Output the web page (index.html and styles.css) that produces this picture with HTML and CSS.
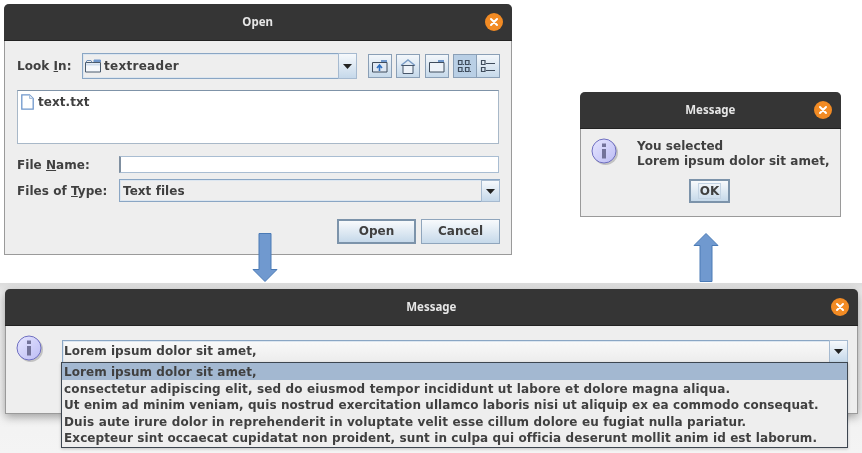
FILE: index.html
```html
<!DOCTYPE html>
<html lang="en">
<head>
<meta charset="utf-8">
<title>File dialogs</title>
<link rel="stylesheet" href="styles.css">
</head>
<body>
<svg width="0" height="0" class="defs">
  <defs>
    <linearGradient id="info" x1="0" y1="0" x2="1" y2="1"><stop offset="0" stop-color="#e6e6ff"/><stop offset="1" stop-color="#bcbcf4"/></linearGradient>
    <symbol id="info-icon" viewBox="0 0 28 28">
      <circle cx="14.500" cy="14.500" r="12.500" fill="#808080" opacity=".4"/>
      <circle cx="13" cy="13" r="12" fill="url(#info)" stroke="#6f6fc0" stroke-width="1"/>
      <rect x="11" y="11" width="4" height="9.500" fill="#73739a"/>
      <rect x="11" y="5.500" width="4" height="3.500" fill="#73739a"/>
    </symbol>
    <symbol id="close-icon" viewBox="0 0 18 18">
      <circle cx="9" cy="9" r="9" fill="#f28b24"/>
      <path d="M6 6l6 6M12 6l-6 6" stroke="#fff" stroke-width="2" stroke-linecap="round"/>
    </symbol>
    <symbol id="arrow-down" viewBox="0 0 9 5">
      <path d="M0 0h9L4.500 5z" fill="#222"/>
    </symbol>
  </defs>
</svg>

<section class="window open-dialog">
  <header class="titlebar"><span class="title">Open</span><svg class="close"><use href="#close-icon"/></svg></header>
  <div class="open-body">
    <div class="lookin-row">
      <label class="label lookin-label">Look <u>I</u>n:</label>
      <div class="combo lookin-combo">
        <svg class="small-icon" width="16" height="14" viewBox="0 0 16 14"><path d="M.5 3.500h15v9.500H.5z" fill="#f4f7fb" stroke="#4a5a6c"/><path d="M1 3.500l1-2h4l1 2" fill="none" stroke="#6f8fb8"/><path d="M9 3V1h6.500v2" fill="#6f97cc" stroke="#6f97cc"/><path d="M1 4.500h14v2H1z" fill="#cfdcec"/></svg>
        <span class="combo-text folder-name">textreader</span>
        <span class="combo-arrow"><svg width="9" height="5"><use href="#arrow-down"/></svg></span>
      </div>
      <div class="tools">
        <button class="tool"><svg width="16" height="14" viewBox="0 0 16 14"><path d="M.5 3.500h14.500v9.500H.5z" fill="#dfe8f3" stroke="#3f4c5c"/><path d="M9 3V1h6v2" fill="#6f97cc"/><path d="M7.500 12V7M5 9l2.500-3L10 9" fill="none" stroke="#2f6fc0" stroke-width="1.600"/></svg></button>
        <button class="tool"><svg width="16" height="15" viewBox="0 0 16 15"><path d="M1 6.500L8 1l7 5.500" fill="none" stroke="#7a9cc6" stroke-width="1.400"/><path d="M3 6.500h10v8H3z" fill="#eef3f9" stroke="#47566a"/><path d="M1.500 6.500h13" stroke="#47566a"/></svg></button>
        <button class="tool"><svg width="16" height="14" viewBox="0 0 16 14"><path d="M.5 3.500h14.500v9.500H.5z" fill="#eef3f9" stroke="#3f4c5c"/><path d="M9 3V1h6v2" fill="#6f97cc"/></svg></button>
        <div class="toggle-pair">
          <button class="tool pair active"><svg width="16" height="14" viewBox="0 0 16 14" fill="none" stroke="#3f4c5c" stroke-width="1.200"><path d="M1.500 1.500h3.500v4h-3.500zM8.500 1.500h3.500v4h-3.500zM1.500 8.500h3.500v4h-3.500zM8.500 8.500h3.500v4h-3.500z"/><path d="M6 5.500h1M13 5.500h1M6 12.500h1M13 12.500h1"/></svg></button>
          <button class="tool pair"><svg width="16" height="14" viewBox="0 0 16 14" fill="none" stroke="#3f4c5c" stroke-width="1.200"><path d="M1.500 1.500h3.500v4h-3.500zM1.500 8.500h3.500v4h-3.500z"/><path d="M6 4.500h9M6 11.500h9"/></svg></button>
        </div>
      </div>
    </div>

    <div class="file-list">
      <div class="file-item">
        <svg width="13" height="16" viewBox="0 0 13 16"><path d="M.8.800h7.700l3.700 3.700v10.700H.8z" fill="#fff" stroke="#6f97cc" stroke-width="1.300"/><path d="M8.500 1v3.500H12" fill="#dbe6f3" stroke="#a9c0dc"/></svg>
        <span>text.txt</span>
      </div>
    </div>

    <div class="field-row name-row">
      <label class="label field-label">File <u>N</u>ame:</label>
      <div class="text-input"></div>
    </div>
    <div class="field-row type-row">
      <label class="label field-label">Files of <u>T</u>ype:</label>
      <div class="combo type-combo">
        <span class="combo-text">Text files</span>
        <span class="combo-arrow"><svg width="9" height="5"><use href="#arrow-down"/></svg></span>
      </div>
    </div>
    <div class="actions">
      <button class="btn default">Open</button>
      <button class="btn">Cancel</button>
    </div>
  </div>
</section>

<section class="window result-dialog">
  <header class="titlebar"><span class="title">Message</span><svg class="close"><use href="#close-icon"/></svg></header>
  <div class="result-body">
    <div class="result-main">
      <svg class="info"><use href="#info-icon"/></svg>
      <p class="result-text">You selected<br>Lorem ipsum dolor sit amet,</p>
    </div>
    <button class="btn ok"><span>OK</span></button>
  </div>
</section>

<svg class="flow-arrow arrow-a" width="26" height="50" viewBox="0 0 26 50"><path d="M7 .500h12v36h6L13 48.500 1 36.500h6z" fill="#7099cf" stroke="#4a7ab5"/></svg>
<svg class="flow-arrow arrow-b" width="26" height="50" viewBox="0 0 26 50"><path d="M7 48.500h12v-36h6L13 .500 1 12.500h6z" fill="#7099cf" stroke="#4a7ab5"/></svg>

<div class="lower-backdrop"></div>
<section class="window select-dialog">
  <header class="titlebar"><span class="title">Message</span><svg class="close"><use href="#close-icon"/></svg></header>
  <div class="select-body">
    <svg class="info"><use href="#info-icon"/></svg>
    <div class="combo select-combo">
      <span class="combo-text">Lorem ipsum dolor sit amet,</span>
      <span class="combo-arrow"><svg width="9" height="5"><use href="#arrow-down"/></svg></span>
    </div>
  </div>
</section>
<ul class="popup">
  <li class="selected">Lorem ipsum dolor sit amet,</li>
  <li class="line-a">consectetur adipiscing elit, sed do eiusmod tempor incididunt ut labore et dolore magna aliqua.</li>
  <li class="line-b">Ut enim ad minim veniam, quis nostrud exercitation ullamco laboris nisi ut aliquip ex ea commodo consequat.</li>
  <li class="line-c">Duis aute irure dolor in reprehenderit in voluptate velit esse cillum dolore eu fugiat nulla pariatur.</li>
  <li class="line-d">Excepteur sint occaecat cupidatat non proident, sunt in culpa qui officia deserunt mollit anim id est laborum.</li>
</ul>
</body>
</html>
```
FILE: styles.css
```css
* { box-sizing: border-box; }
html, body { margin: 0; padding: 0; }
body {
  width: 862px; height: 453px; position: relative; overflow: hidden;
  background: #fff;
  font: bold 12px/15px "DejaVu Sans", sans-serif;
  letter-spacing: .05px;
  color: #404040;
}
.defs { position: absolute; }
button { font: inherit; color: inherit; padding: 0; letter-spacing: inherit; }
ul, p { margin: 0; padding: 0; }

.window {
  position: absolute;
  background: #eeeeee;
  border: 1px solid #9a9a9a;
  border-top: 0;
  border-radius: 5px 5px 0 0;
  display: flex; flex-direction: column;
  filter: blur(.35px);
}
.titlebar {
  height: 37px; flex: none;
  margin: 0 -1px;
  background: #353535;
  border-radius: 5px 5px 0 0;
  border-bottom: 1px solid #222;
  color: #e6e6e6;
  display: flex; align-items: center; justify-content: center;
  position: relative;
}
.title { font: bold 12.500px/1 "Noto Sans", sans-serif; letter-spacing: 0; transform: scaleX(.92); }
.close { position: absolute; right: 9px; top: 9px; width: 18px; height: 18px; }

.open-dialog { left: 4px; top: 4px; width: 508px; height: 251px; }
.result-dialog { left: 580px; top: 92px; width: 261px; height: 125px; }
.select-dialog { left: 5px; top: 289px; width: 853px; height: 125px; box-shadow: 0 3px 10px rgba(0, 0, 0, .35); }

.open-body { padding: 12px 11px 0 12px; display: flex; flex-direction: column; flex: 1; }
.lookin-row { display: flex; align-items: flex-start; height: 27px; }
.lookin-label { width: 65px; padding-top: 6px; }
.combo {
  display: flex; align-items: center;
  background: #eeeeee;
  border: 1px solid #8aa6c4;
  box-shadow: inset 0 0 0 1px #dce6f0;
  position: relative;
}
.lookin-combo { width: 275px; height: 26px; padding-left: 2px; }
.small-icon { margin-right: 3px; flex: none; }
.combo-text { flex: 1; white-space: nowrap; }
.folder-name { letter-spacing: .3px; }
.combo-arrow {
  flex: none; align-self: stretch; width: 19px;
  margin: -1px -1px -1px 0;
  border: 1px solid #a6bad0;
  background: linear-gradient(#f6f9fc, #c5d8ea);
  display: flex; align-items: center; justify-content: center;
}
.combo-arrow svg { display: block; }
.tools { display: flex; gap: 4.500px; margin-left: 11px; }
.tool {
  width: 24px; height: 24px; margin-top: 1px;
  border: 1px solid #8a9fb6;
  background: linear-gradient(#f3f7fb, #c6d9ea);
  display: flex; align-items: center; justify-content: center;
}
.toggle-pair { display: flex; }
.tool.pair:last-child { margin-left: -1px; }
.tool.active { background: #b9cfe5; }

.file-list {
  height: 54px; margin-top: 10px; margin-right: 1px;
  background: #fff;
  border: 1px solid #a8b8c8;
  border-top-color: #7f93a8;
  padding: 2px 3px;
}
.file-item { display: flex; align-items: center; gap: 4px; height: 18px; }

.field-row { display: flex; align-items: center; }
.field-label { width: 102px; padding-top: 1px; }
.name-row { margin-top: 12px; height: 17px; margin-right: 1px; }
.text-input {
  flex: 1; height: 17px; background: #fff;
  border: 1px solid #a9bdd2;
  border-left: 2px solid #7f8fa0;
}
.type-row { margin-top: 6px; height: 23px; }
.type-combo { flex: 1; height: 23px; padding: 1px 0 0 3px; }

.actions { display: flex; justify-content: flex-end; gap: 5px; margin-top: 17px; }
.btn {
  width: 79px; height: 25px;
  border: 1px solid #8fa5bc;
  background: linear-gradient(#f8fafc, #c6d9ea);
}
.btn.default { border: 2px solid #7c93aa; }

.result-body { flex: 1; padding: 9px 8px 0 10px; display: flex; flex-direction: column; align-items: center; }
.result-main { display: flex; align-self: stretch; }
.info { width: 28px; height: 28px; flex: none; }
.result-text { margin: 1px 0 0 18px; white-space: nowrap; }
.ok { width: 41px; height: 24px; margin: 10px 4px 0 0; border: 2px solid #7c93aa; }
.ok span { display: inline-block; border: 1px solid #c3d3e3; padding: 0 1px; line-height: 14px; }

.flow-arrow { position: absolute; display: block; }
.arrow-a { left: 252px; top: 233px; }
.arrow-b { left: 693px; top: 233px; }

.lower-backdrop {
  position: absolute; left: 0; top: 283px; width: 862px; height: 170px;
  background: linear-gradient(#dcdcdc, #ededed 10px, #f4f4f4);
}
.select-body { flex: 1; padding: 9px 9px 0 10px; display: flex; align-items: flex-start; }
.select-combo { margin-left: 18px; margin-top: 5px; flex: 1; height: 24px; padding: 0 0 1px 1px; background: linear-gradient(#f9f9f9, #ececec); }

.popup {
  position: absolute; left: 61px; top: 362px; width: 787px; height: 86px;
  list-style: none;
  background: #eeeeee;
  border: 1px solid #3d4650;
  box-shadow: 0 1px 3px rgba(0, 0, 0, .2);
  filter: blur(.35px);
}
.popup li { height: 16.600px; line-height: 16.600px; padding: 1px 0 0 2px; white-space: nowrap; }
.popup .selected { background: #a3b8d1; }
.popup .line-a { letter-spacing: .15px; }
.popup .line-b { letter-spacing: .08px; }
.popup .line-c { letter-spacing: .14px; }
.popup .line-d { letter-spacing: .1px; }
```
